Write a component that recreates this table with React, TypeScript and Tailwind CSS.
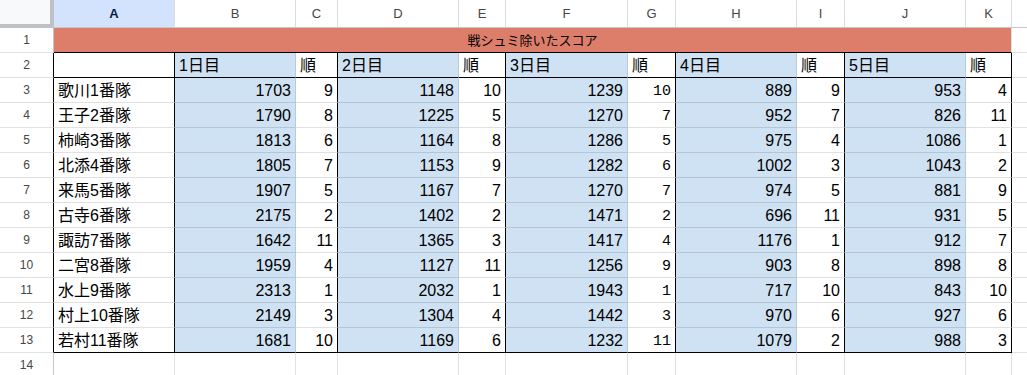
import React from "react";

const W = [
  "w-[121px]",
  "w-[121px]",
  "w-[42px]",
  "w-[121px]",
  "w-[47px]",
  "w-[122px]",
  "w-[48px]",
  "w-[121px]",
  "w-[48px]",
  "w-[121px]",
  "w-[46px]",
];
const LETTERS = ["A", "B", "C", "D", "E", "F", "G", "H", "I", "J", "K"];
const BLUE = [false, true, false, true, false, true, false, true, false, true, false];
const SEP = [true, false, true, false, true, false, true, false, true, false, true];

const HEAD2 = ["", "1日目", "順", "2日目", "順", "3日目", "順", "4日目", "順", "5日目", "順"];

const DATA: (string | number)[][] = [
  ["歌川1番隊", 1703, 9, 1148, 10, 1239, 10, 889, 9, 953, 4],
  ["王子2番隊", 1790, 8, 1225, 5, 1270, 7, 952, 7, 826, 11],
  ["柿崎3番隊", 1813, 6, 1164, 8, 1286, 5, 975, 4, 1086, 1],
  ["北添4番隊", 1805, 7, 1153, 9, 1282, 6, 1002, 3, 1043, 2],
  ["来馬5番隊", 1907, 5, 1167, 7, 1270, 7, 974, 5, 881, 9],
  ["古寺6番隊", 2175, 2, 1402, 2, 1471, 2, 696, 11, 931, 5],
  ["諏訪7番隊", 1642, 11, 1365, 3, 1417, 4, 1176, 1, 912, 7],
  ["二宮8番隊", 1959, 4, 1127, 11, 1256, 9, 903, 8, 898, 8],
  ["水上9番隊", 2313, 1, 2032, 1, 1943, 1, 717, 10, 843, 10],
  ["村上10番隊", 2149, 3, 1304, 4, 1442, 3, 970, 6, 927, 6],
  ["若村11番隊", 1681, 10, 1169, 6, 1232, 11, 1079, 2, 988, 3],
];

function RowHeader({ n, black }: { n: number; black?: boolean }) {
  return (
    <div
      className={
        "w-[54px] shrink-0 h-full flex items-center justify-center text-[12px] text-[#444746] bg-white border-b border-r border-b-[#e1e1e1] " +
        (black ? "border-r-black" : "border-r-[#c4c7c5]")
      }
    >
      {n}
    </div>
  );
}

function Cell({
  i,
  children,
  right,
  mono,
  blue,
  bBlack,
}: {
  i: number;
  children?: React.ReactNode;
  right?: boolean;
  mono?: boolean;
  blue?: boolean;
  bBlack?: boolean;
}) {
  return (
    <div
      className={
        W[i] +
        " shrink-0 h-full flex items-end px-[4px] border-r border-b whitespace-nowrap overflow-hidden leading-[18px] " +
        (blue ? "bg-[#cfe2f3] " : "bg-white ") +
        (SEP[i] ? "border-r-black " : blue ? "border-r-[#0000001a] " : "border-r-[#e1e1e1] ") +
        (bBlack ? "border-b-black " : blue ? "border-b-[#0000001f] " : "border-b-[#e1e1e1] ") +
        (right ? "justify-end " : "justify-start ") +
        (mono
          ? "font-['Liberation_Mono',monospace] text-[15px] pb-[1px]"
          : "text-[16px] pb-[2px]")
      }
    >
      {children}
    </div>
  );
}

function Tail() {
  return <div className="flex-1 h-full bg-white border-b border-[#e1e1e1]" />;
}

export default function App() {
  return (
    <div className="w-[1027px] h-[375px] overflow-hidden bg-white text-black font-['Liberation_Sans',Arial,'Noto_Sans_CJK_JP',sans-serif]">
      {/* column header */}
      <div className="flex h-[28px]">
        <div className="w-[54px] shrink-0 h-full bg-[#f8f9fa] border-r-4 border-b-4 border-[#bfc1c4]" />
        {LETTERS.map((l, i) => (
          <div
            key={l}
            className={
              W[i] +
              " shrink-0 h-full flex items-center justify-center text-[13px] border-r border-b border-r-[#dadce0] border-b-[#c4c7c5] " +
              (i === 0 ? "bg-[#d3e3fd] font-bold text-[#041e49]" : "bg-white text-[#444746]")
            }
          >
            {l}
          </div>
        ))}
        <div className="flex-1 h-full bg-white border-b border-[#c4c7c5]" />
      </div>

      {/* row 1 */}
      <div className="flex h-[25px]">
        <RowHeader n={1} />
        <div className="w-[958px] shrink-0 h-full bg-[#dd7e6b] border-r border-b border-r-[#e1e1e1] border-b-black flex items-center justify-center text-[13px] pt-[1px]">
          戦シュミ除いたスコア
        </div>
        <Tail />
      </div>

      {/* row 2 */}
      <div className="flex h-[25px]">
        <RowHeader n={2} black />
        {HEAD2.map((h, i) => (
          <Cell key={i} i={i} blue={BLUE[i]} bBlack>
            {h}
          </Cell>
        ))}
        <Tail />
      </div>

      {DATA.map((row, r) => (
        <div key={r} className="flex h-[25px]">
          <RowHeader n={r + 3} black />
          {row.map((v, i) => (
            <Cell
              key={i}
              i={i}
              blue={BLUE[i]}
              right={i > 0}
              mono={i === 6}
              bBlack={r === DATA.length - 1}
            >
              {v}
            </Cell>
          ))}
          <Tail />
        </div>
      ))}

      {/* row 14 */}
      <div className="flex h-[25px]">
        <RowHeader n={14} />
        {W.map((w, i) => (
          <div key={i} className={w + " shrink-0 h-full bg-white border-r border-b border-[#e1e1e1]"} />
        ))}
        <Tail />
      </div>
    </div>
  );
}
